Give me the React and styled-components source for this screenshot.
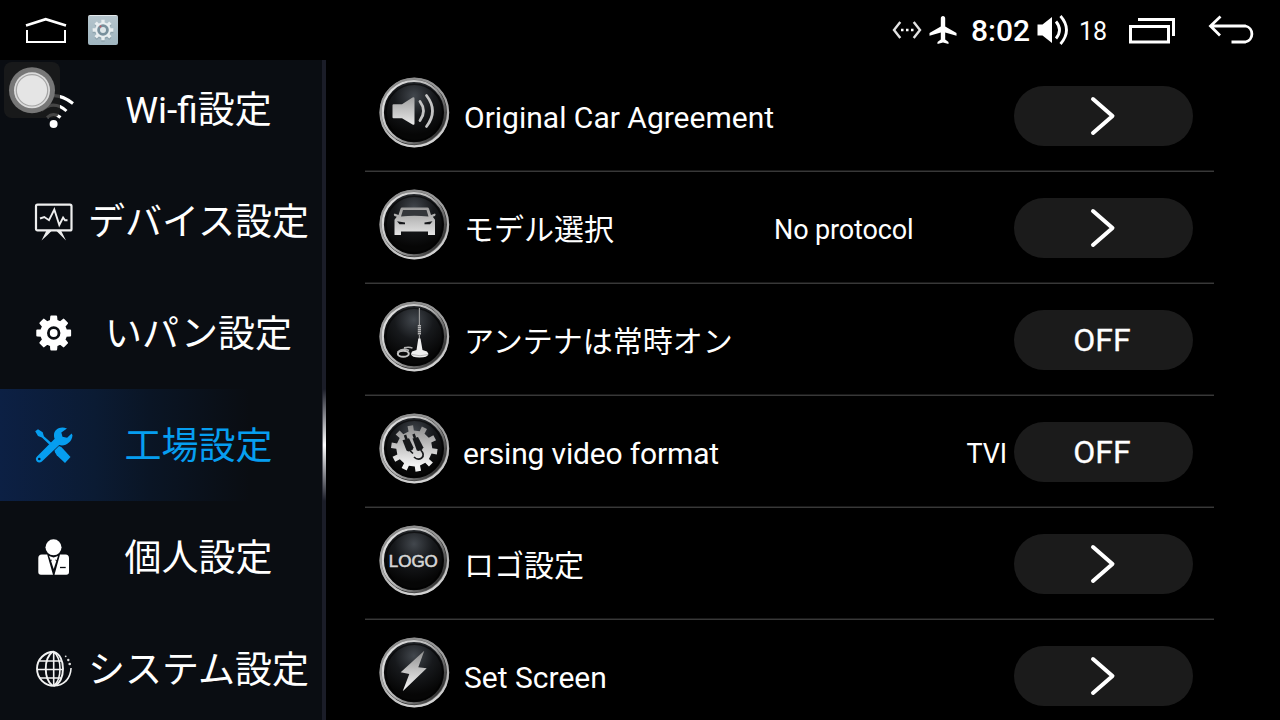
import React from "react";
import styled, { createGlobalStyle, css } from "styled-components";

const GlobalStyle = createGlobalStyle`
  * { box-sizing: border-box; }
  body {
    margin: 0;
    background: #000;
    color: #fff;
    font-family: Roboto, "Noto Sans CJK JP", sans-serif;
    overflow: hidden;
  }
  svg { display: block; flex: none; }
`;

const Screen = styled.div`
  position: relative;
  display: flex;
  flex-direction: column;
  width: 1280px;
  height: 720px;
  overflow: hidden;
  background: #000;
`;

const StatusBar = styled.header`
  display: flex;
  align-items: center;
  justify-content: space-between;
  height: 60px;
  flex: none;
  padding: 0 25px 0 24px;
`;

const StatusGroup = styled.div`
  display: flex;
  align-items: center;
`;

const AppBadge = styled.div`
  width: 30px;
  height: 30px;
  margin-left: 20px;
  border-radius: 2px;
  border-top: 1px solid #e3e8eb;
  background: linear-gradient(#b5c5cd, #9fb5bf);
`;

const Clock = styled.span`
  width: 65px;
  margin-left: 14px;
  font-size: 30px;
  font-weight: 500;
  line-height: 60px;
  padding-top: 2px;
`;

const Volume = styled.span`
  width: 49px;
  margin-left: 9px;
  font-size: 25px;
  line-height: 60px;
  padding-top: 3px;
`;

const Body = styled.div`
  display: flex;
  flex: 1;
  min-height: 0;
`;

const Sidebar = styled.nav`
  position: relative;
  width: 326px;
  flex: none;
  overflow: hidden;
  background: #0a0d12;
  border-right: 4px solid #1b1d28;
`;

const NavList = styled.div`
  display: flex;
  flex-direction: column;
  margin-top: -7px;
`;

const NavItem = styled.div`
  position: relative;
  display: flex;
  align-items: center;
  height: 112px;
  flex: none;
  padding-left: 34px;
  color: #fff;
  ${(p) =>
    p.$active &&
    css`
      color: #069ef0;
      background: linear-gradient(90deg, #0c2044 0, #0b1b33 95px, #0a1525 150px, #0a0d12 250px);
    `}
`;

const NavLabel = styled.span`
  flex: 1;
  padding-top: 4px;
  font-size: 37px;
  line-height: 44px;
  text-align: center;
  white-space: nowrap;
  margin-left: 1px;
`;

const Glow = styled.div`
  position: absolute;
  left: 322px;
  top: 389px;
  width: 4px;
  height: 112px;
  border-left: 1px solid rgba(27, 29, 40, 0.6);
  background: linear-gradient(#1b1d28, #8b8c92 25%, #fff 50%, #8b8c92 75%, #1b1d28);
`;

const Settings = styled.main`
  display: flex;
  flex-direction: column;
  width: 849px;
  margin-left: 39px;
  overflow: hidden;
`;

const SettingRow = styled.div`
  display: flex;
  align-items: center;
  height: 112px;
  flex: none;
  padding: 0 21px 0 14px;
  border-bottom: 1px solid #383838;
  box-shadow: inset 0 -1px #1a1a1a;
`;

const SettingIcon = styled.div`
  width: 71px;
  height: 71px;
  margin-top: -7px;
  flex: none;
`;

const SettingName = styled.span`
  width: 310px;
  margin-left: ${(p) => (p.$scrolled ? 13 : 14)}px;
  margin-right: ${(p) => (p.$scrolled ? 1 : 0)}px;
  padding-top: 5px;
  font-size: 30px;
  letter-spacing: ${(p) => (p.$scrolled ? "-0.16px" : "normal")};
  line-height: 40px;
  white-space: nowrap;
`;

const SettingValue = styled.span`
  flex: 1;
  padding: 5px 7px 0 0;
  font-size: 27px;
  letter-spacing: -0.12px;
  line-height: 40px;
  text-align: ${(p) => p.$align || "left"};
  white-space: nowrap;
`;

const Pill = styled.button`
  display: flex;
  align-items: center;
  justify-content: center;
  width: 179px;
  height: 60px;
  flex: none;
  padding: 0 3px 0 0;
  border: 0;
  border-radius: 30px;
  background: #1b1b1b;
  color: #fff;
  font: 32px/60px Roboto, sans-serif;
  -webkit-text-stroke: 0.3px #fff;
`;

const TouchPad = styled.div`
  position: absolute;
  left: 4px;
  top: 62px;
  width: 56px;
  height: 56px;
  border-radius: 8px;
  background: rgba(28, 28, 28, 0.82);
`;

const gearPath = (cx, cy, outer, inner, teeth, start, half, rootHalf) => {
  const pts = [];
  for (let i = 0; i < teeth; i++) {
    const a = start + (i * 360) / teeth;
    [
      [inner, a - rootHalf],
      [outer, a - half],
      [outer, a + half],
      [inner, a + rootHalf],
    ].forEach(([r, d]) => {
      const t = (d * Math.PI) / 180;
      pts.push(`${(cx + r * Math.cos(t)).toFixed(2)} ${(cy + r * Math.sin(t)).toFixed(2)}`);
    });
  }
  return `M${pts.join("L")}Z`;
};

const HomeIcon = () => (
  <svg width="44" height="30" viewBox="0 0 44 30" fill="none" stroke="#fff">
    <path d="M2 10.5 21.7 4.2 42 10.5" strokeWidth="2.6" />
    <path d="M3 15v12h38V15" strokeWidth="2" />
  </svg>
);

const GearArt = styled.svg`
  margin-top: -1px;
`;

const AppGear = () => (
  <GearArt width="30" height="30" viewBox="0 0 30 30">
    <path d={gearPath(15, 16.5, 10.5, 7.8, 8, 0, 9, 13)} fill="#7f949e" opacity=".6" />
    <path d={gearPath(15, 15, 10.5, 7.8, 8, 0, 9, 13)} fill="#e8eef0" />
    <circle cx="15" cy="15" r="5.8" fill="#78909c" />
    <circle cx="15" cy="15" r="3" fill="#dfe7ea" />
    <circle cx="12.5" cy="11.5" r="1" fill="#c65b66" />
  </GearArt>
);

const LinkIcon = () => (
  <svg width="30" height="20" viewBox="0 0 30 20" fill="none" stroke="#e2e2e2" strokeWidth="2.400">
    <path d="M8.300 2 2 10l6.300 8M21.700 2 28 10l-6.300 8" />
    <path d="M9 10h12.500" stroke="#fff" strokeWidth="2.400" strokeDasharray="2.500 2.500" />
  </svg>
);

const PlaneIcon = () => (
  <svg width="28" height="30" viewBox="0 0 28 30" fill="#fff">
    <path d="M14 1c-1.400 0-2.200 1-2.200 2.400v8L.5 18v2.800l11.300-3.300v7L8.500 27v2l5.500-1.400 5.500 1.400v-2l-3.300-2.500v-7l11.300 3.300V18l-11.300-6.600v-8C16.200 2 15.400 1 14 1z" />
  </svg>
);

const VolumeIcon = () => (
  <svg width="34" height="30" viewBox="0 0 34 30">
    <path d="M1.500 9.500h5L16 2v26l-9.500-7.500h-5z" fill="#fff" />
    <path d="M20 6.500q7 8.500 0 17M24.500 1q12 14 0 28" fill="none" stroke="#fff" strokeWidth="2.800" />
  </svg>
);

const RecentsIcon = () => (
  <svg width="48" height="30" viewBox="0 0 48 30" fill="none" stroke="#fff" strokeWidth="3">
    <path d="M2.500 11.500h38v15.500h-38z" />
    <path d="M10 4.500h35.500V21" />
  </svg>
);

const BackIcon = () => (
  <svg width="48" height="30" viewBox="0 0 48 30" fill="none" stroke="#fff" strokeWidth="2.800">
    <path d="M13.500 1.500 3.500 11l9.500 9.500M3 11h35.500a8.200 8.200 0 0 1 0 16H24.500" />
  </svg>
);

const NavSvg = ({ children }) => (
  <svg width="40" height="40" viewBox="0 0 40 40" fill="none">
    {children}
  </svg>
);

const WifiIcon = () => (
  <NavSvg>
    <g stroke="#fff" strokeWidth="3">
      <path d="M13 28.500q6.500-6 13.500 0" />
      <path d="M7.500 21.500q12-11 25 .5" />
      <path d="M1.500 14q18-15 37.500 .5" />
    </g>
    <circle cx="19.600" cy="35" r="4" fill="#fff" />
  </NavSvg>
);

const DeviceIcon = () => (
  <NavSvg>
    <rect x="2" y="3.700" width="35.500" height="25.700" rx="1.500" stroke="#eee" strokeWidth="2.200" />
    <path d="M6 17.500 10.300 16 15 19.200l5.300-10.700 5 15.500 3.800-7.500L31 19.300h2.500" stroke="#eee" strokeWidth="1.900" />
    <path d="M18 29.500 13.500 34 7.500 39.500l5-10zM22 29.500l4.500 4.500 5.500 5.500-5-10z" fill="#eee" />
  </NavSvg>
);

const GearIcon = () => (
  <NavSvg>
    <path d={gearPath(19.7, 20, 16.6, 12.6, 8, 0, 8.5, 13)} fill="#fff" stroke="#fff" strokeWidth="2" strokeLinejoin="round" />
    <circle cx="19.700" cy="20" r="5.300" stroke="#0a0d12" strokeWidth="2.800" fill="#fff" />
  </NavSvg>
);

const ToolsIcon = () => (
  <NavSvg>
    <path d="M33 3.500C26 .8 20 4.500 20 10.200c0 1.600.2 2.600.7 3.600L3 31.500c-3.400 3.400 1.300 8.200 4.900 5L25.200 20C31 21.800 38 17.500 38.500 10.300l-.9-1.800-4.500 4.300-4.600-1-1.200-4.300z" fill="currentColor" />
    <circle cx="5.300" cy="34" r="1.300" fill="#0b1b33" />
    <path d="M1.200 6.300 4 4.300l4.700 3 1.200 4L22 22l-2 2L7.900 12.500 4 11z" fill="currentColor" />
    <path d="m20.500 25.500 4.500-4.500 2.300 1 1.700 1.800L36.500 32 31 38l-8.300-7.700-1.700-3z" fill="currentColor" />
  </NavSvg>
);

const PersonIcon = () => (
  <NavSvg>
    <circle cx="19.500" cy="10.300" r="8" fill="#fff" />
    <path d="M8 17.500h5.200L19 37.700H7a2.700 2.700 0 0 1-2.700-2.700V21A3.600 3.600 0 0 1 8 17.500zM26 17.500h5.200A3.600 3.600 0 0 1 35 21v14a2.700 2.700 0 0 1-2.700 2.700H20.500z" fill="#fff" />
    <path d="m15 19 4.600 1.500L24 19l-1.500 4.500L19.700 32l-2.800-8.500z" fill="#fff" />
    <path d="m15.800 24 2.200-1M23.500 24l-2.200-1" stroke="#0a0d12" strokeWidth=".8" />
    <path d="M26 30.500h5.700" stroke="#0a0d12" strokeWidth="1.300" />
  </NavSvg>
);

const GlobeIcon = () => (
  <NavSvg>
    <g stroke="#f2f2f2" strokeWidth="1.900">
      <path d="M20 2.800a17 17 0 0 0 0 34" />
      <path d="M20 2.800c12 3.500 12 30.500 0 34M18.500 2.800c-9 7-9 27 0 34" />
      <path d="M20 2.800c8 7 8 27 0 34M19.700 2.800v34M3 20.500h26M5.500 12H28M5.500 29H28" strokeWidth="1.600" />
    </g>
    <path d="M19 37.500c11 .5 18.500-7 18.800-18.500h-1.500c-.5 9-5.500 15.500-14 17z" fill="#f2f2f2" />
    <g fill="#ddd">
      <circle cx="31.700" cy="7.300" r=".9" />
      <circle cx="34.300" cy="11" r="1.200" />
      <circle cx="35.700" cy="15" r="1.300" />
    </g>
  </NavSvg>
);

const Disc = ({ children }) => (
  <svg width="71" height="71" viewBox="0 0 71 71" fill="none">
    <defs>
      <radialGradient id="discFace" cx=".5" cy=".24" r=".62">
        <stop offset="0" stopColor="#42474d" />
        <stop offset=".5" stopColor="#17191c" />
        <stop offset="1" stopColor="#060606" />
      </radialGradient>
      <linearGradient id="discRim" x1="0" y1="0" x2="1" y2="1">
        <stop offset="0" stopColor="#8a8a8a" />
        <stop offset=".3" stopColor="#4a4a4a" />
        <stop offset=".65" stopColor="#1a1a1a" />
        <stop offset="1" stopColor="#b5b5b5" />
      </linearGradient>
      <linearGradient id="discEdge" x1=".2" y1="0" x2=".5" y2="1">
        <stop offset="0" stopColor="#8a8a8a" />
        <stop offset=".5" stopColor="#a5a5a5" />
        <stop offset="1" stopColor="#d2d2d2" />
      </linearGradient>
      <linearGradient id="discInner" x1="0" y1=".1" x2="1" y2=".8">
        <stop offset="0" stopColor="#e8e8e8" />
        <stop offset=".5" stopColor="#b5b5b5" />
        <stop offset="1" stopColor="#222" />
      </linearGradient>
      <linearGradient id="metal" gradientUnits="userSpaceOnUse" x1="0" y1="14" x2="0" y2="52">
        <stop offset="0" stopColor="#8f8f8f" />
        <stop offset=".5" stopColor="#c2c2c2" />
        <stop offset="1" stopColor="#f3f3f3" />
      </linearGradient>
    </defs>
    <circle cx="35.300" cy="35.500" r="34.800" fill="url(#discRim)" />
    <circle cx="35.300" cy="35.500" r="33.800" stroke="url(#discEdge)" strokeWidth="2.200" />
    <circle cx="35" cy="35.200" r="31.200" fill="url(#discFace)" stroke="url(#discInner)" strokeWidth="2.200" />
    <circle cx="35.300" cy="35.500" r="28.300" stroke="#000" strokeOpacity=".55" strokeWidth="1.500" />
    {children}
  </svg>
);

const SpeakerDisc = () => (
  <Disc>
    <path d="M14.500 27.200H23L33.500 20.500q2-1 2 1v25q0 2-2 1L23 41.300h-8.500q-1 0-1-1V28.200q0-1 1-1z" fill="url(#metal)" />
    <path d="M41 24.500q7 9.500 0 19M47.500 18.500q12 15.500 0 31" stroke="#c4c4c4" strokeWidth="2.800" strokeLinecap="round" />
  </Disc>
);

const CarDisc = () => (
  <Disc>
    <path d="M23 18.500h25.500q1 0 1.500 1.200l2 6.300 4-1.500q1.500 1-.2 2.500l-2 .8 2.200 3V46h-7v-3.500H22V46h-6.500V30.800l2.300-3-2.300-.8q-1.500-1.500 0-2.500l4 1.500 2-6.300q.5-1.200 1.500-1.200z" fill="url(#metal)" />
    <path d="M24 21h23.500l2 6.500q-14.500-1.500-27.500 0z" fill="#34373b" />
    <path d="m18 32.300 8 1.200v1.800h-5.500zM53.500 32.300l-8 1.200v1.800H51z" fill="#15171a" />
  </Disc>
);

const AntennaDisc = () => (
  <Disc>
    <path d="M40.400 7v18M40.400 34v5" stroke="#9a9a9a" strokeWidth="1.200" />
    <path d="M40.400 24v10" stroke="#b5b5b5" strokeWidth="3.200" strokeDasharray="1.500 .5" />
    <path d="M39.300 37.500h2.200L43.500 49l4.500 1.500 1.500 2.500q-.8 3.500-8.900 3.500T32 53l1-2.500 4.500-1.500z" fill="#eee" />
    <path d="M33 53.500q8 2.500 16 0" stroke="#aaa" strokeWidth=".8" />
    <ellipse cx="24.300" cy="52.800" rx="5.500" ry="3" stroke="#c5c5c5" strokeWidth="2" />
    <path d="M18.500 51q5-4.500 11.500-1.500M25 46.800q5-1.300 8.500.3" stroke="#b5b5b5" strokeWidth="1.400" />
  </Disc>
);

const GearDisc = () => (
  <Disc>
    <path d={gearPath(35.3, 35.5, 23.3, 18, 10, -100, 7, 8.5)} fill="url(#metal)" />
    <g stroke="#17191b" fill="#17191b">
      <path d="m26 22 1.500 4.500" strokeWidth="2.500" />
      <path d="m23.500 27.300 6.500-2 4.500 9.300-1 2.300-4.300 1.500-1.700-1z" stroke="none" />
      <path d="m34.500 21 1.500 4" strokeWidth="2.500" />
      <path d="m33.500 25.500 5.500-1.500 5.300 10.300-1.200 2.500-3.600 1.300-1.700-.7z" stroke="none" />
      <path d="M30.800 37.500 34 40.500M41.700 37q4.500 4.500 1 8-4 2.800-7.700-1" fill="none" strokeWidth="1.700" />
    </g>
  </Disc>
);

const LogoText = styled.text`
  font: 17px "Liberation Sans", sans-serif;
  fill: #d6d6d6;
  stroke: #d6d6d6;
  stroke-width: 0.6px;
`;

const LogoDisc = () => (
  <Disc>
    <LogoText x="9.800" y="42.200" textLength="49">LOGO</LogoText>
  </Disc>
);

const BoltDisc = () => (
  <Disc>
    <path d="M45.300 13.700 21.700 35.300l8.600 1.700-6.600 17.300 24-23-8.400-1z" fill="url(#metal)" />
  </Disc>
);

const Chevron = () => (
  <svg width="30" height="44" viewBox="0 0 30 44" fill="none" stroke="#fff" strokeWidth="4" strokeLinecap="round" strokeLinejoin="round">
    <path d="M6 5 25.500 22 6 39" />
  </svg>
);

const TouchIcon = () => (
  <svg width="56" height="56" viewBox="0 0 56 56">
    <circle cx="28" cy="28.300" r="23" fill="#777" />
    <circle cx="28" cy="28.300" r="18" fill="#dcdcdc" />
    <circle cx="28" cy="28.300" r="15.700" fill="#e5e5e5" stroke="#a5a5a5" strokeWidth="1.200" />
  </svg>
);

const navItems = [
  { label: "Wi-fi設定", Icon: WifiIcon },
  { label: "デバイス設定", Icon: DeviceIcon },
  { label: "いパン設定", Icon: GearIcon },
  { label: "工場設定", Icon: ToolsIcon, active: true },
  { label: "個人設定", Icon: PersonIcon },
  { label: "システム設定", Icon: GlobeIcon },
];

const settings = [
  { name: "Original Car Agreement", Icon: SpeakerDisc },
  { name: "モデル選択", value: "No protocol", Icon: CarDisc },
  { name: "アンテナは常時オン", off: true, Icon: AntennaDisc },
  { name: "ersing video format", value: "TVI", align: "right", off: true, scrolled: true, Icon: GearDisc },
  { name: "ロゴ設定", Icon: LogoDisc },
  { name: "Set Screen", Icon: BoltDisc },
];

const StatusSlot = styled.div`
  margin-left: ${(p) => p.$gap || 0}px;
`;

export default function App() {
  return (
    <Screen>
      <GlobalStyle />
      <StatusBar>
        <StatusGroup>
          <HomeIcon />
          <AppBadge>
            <AppGear />
          </AppBadge>
        </StatusGroup>
        <StatusGroup>
          <LinkIcon />
          <StatusSlot $gap={7}>
            <PlaneIcon />
          </StatusSlot>
          <Clock>8:02</Clock>
          <VolumeIcon />
          <Volume>18</Volume>
          <RecentsIcon />
          <StatusSlot $gap={31}>
            <BackIcon />
          </StatusSlot>
        </StatusGroup>
      </StatusBar>
      <Body>
        <Sidebar>
          <NavList>
            {navItems.map(({ label, Icon, active }) => (
              <NavItem key={label} $active={active}>
                <Icon />
                <NavLabel>{label}</NavLabel>
              </NavItem>
            ))}
          </NavList>
        </Sidebar>
        <Settings>
          {settings.map(({ name, value, align, off, scrolled, Icon }) => (
            <SettingRow key={name}>
              <SettingIcon>
                <Icon />
              </SettingIcon>
              <SettingName $scrolled={scrolled}>{name}</SettingName>
              <SettingValue $align={align}>{value}</SettingValue>
              <Pill>{off ? "OFF" : <Chevron />}</Pill>
            </SettingRow>
          ))}
        </Settings>
      </Body>
      <Glow />
      <TouchPad>
        <TouchIcon />
      </TouchPad>
    </Screen>
  );
}
